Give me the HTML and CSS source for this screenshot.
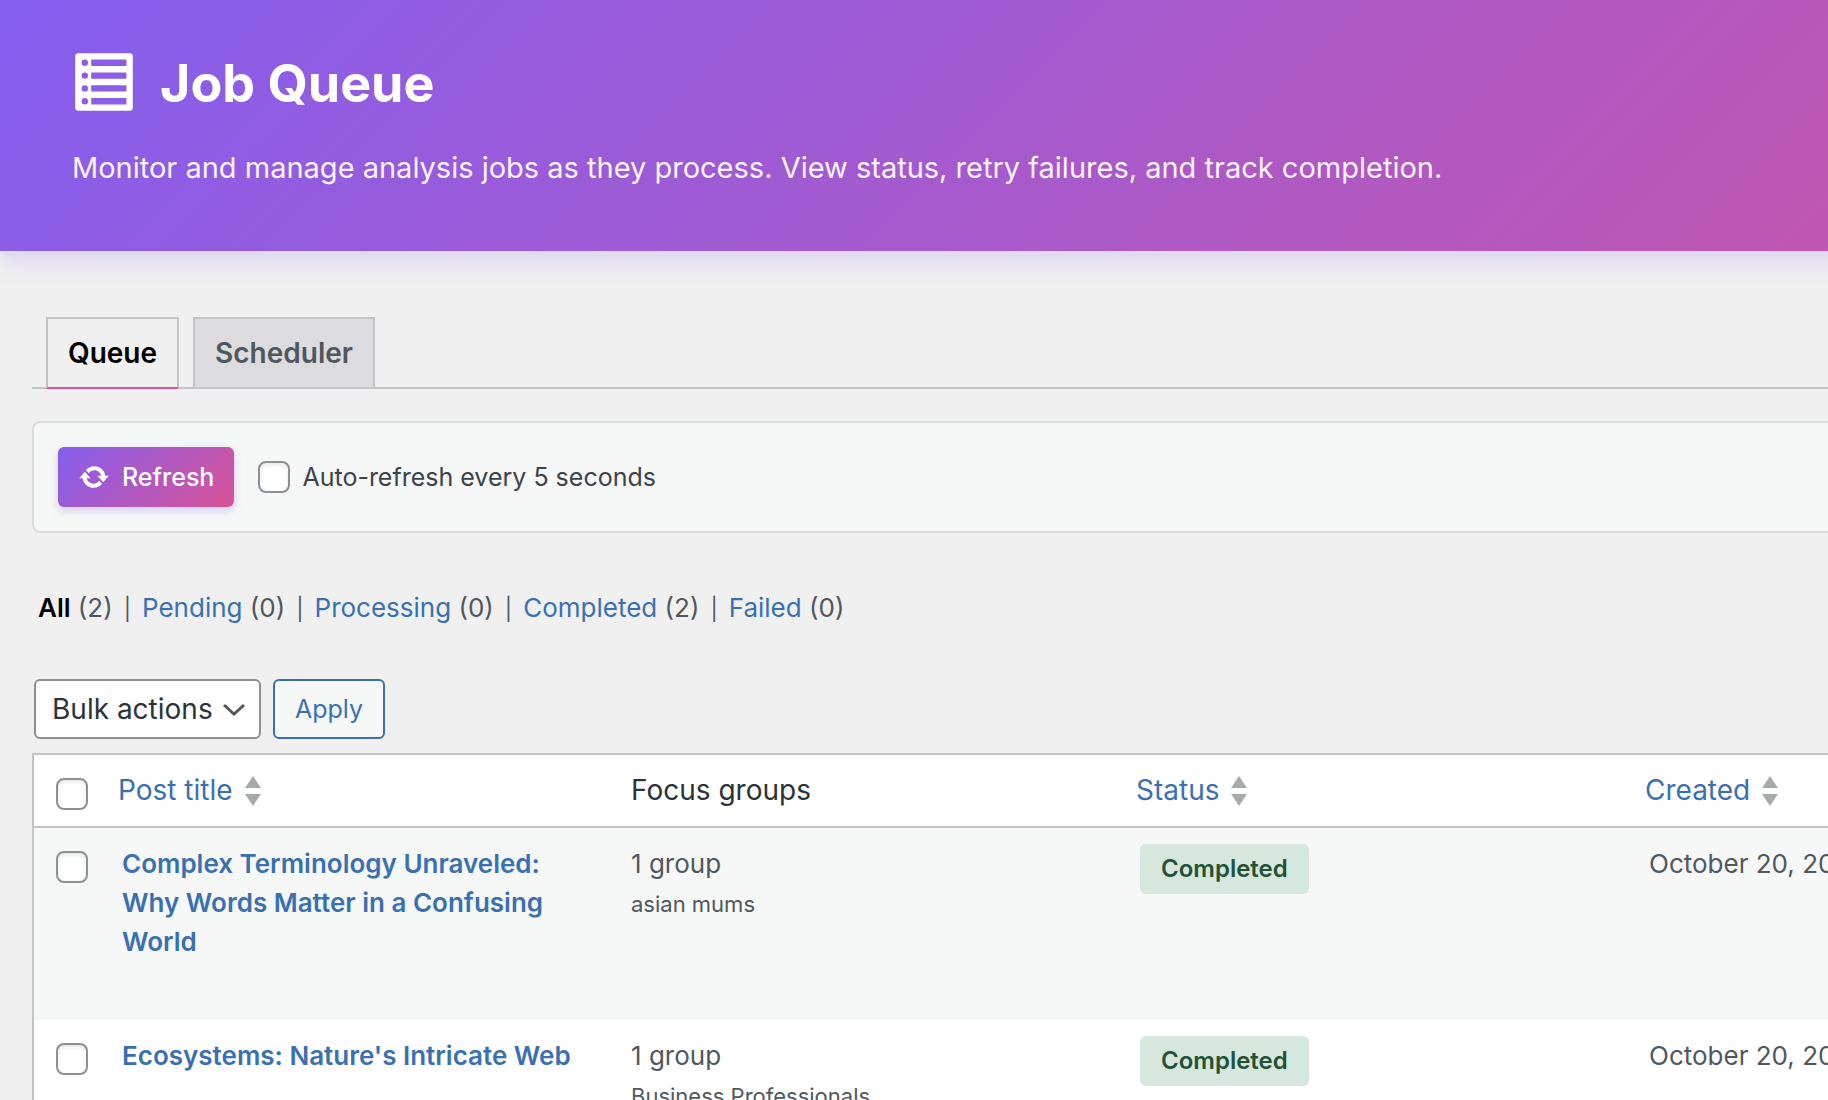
FILE: index.html
```html
<!DOCTYPE html>
<html lang="en">
<head>
<meta charset="utf-8">
<title>Job Queue</title>
<link rel="stylesheet" href="styles.css">
</head>
<body>
<svg class="sprite" aria-hidden="true">
  <symbol id="sort" viewBox="0 0 16 30"><path d="M8 0 16 12H0zM0 18h16L8 30z"/></symbol>
</svg>
<header class="page-header">
  <h1 class="page-title">
    <svg class="title-icon" viewBox="0 0 20 20" aria-hidden="true"><path fill-rule="evenodd" d="M2 1h16a1 1 0 0 1 1 1v16a1 1 0 0 1-1 1H2a1 1 0 0 1-1-1V2a1 1 0 0 1 1-1zM4 3a1 1 0 1 0 0 2 1 1 0 0 0 0-2zM6 3h11v2H6zM4 7a1 1 0 1 0 0 2 1 1 0 0 0 0-2zM6 7h11v2H6zM4 11a1 1 0 1 0 0 2 1 1 0 0 0 0-2zM6 11h11v2H6zM4 15a1 1 0 1 0 0 2 1 1 0 0 0 0-2zM6 15h11v2H6z"/></svg>
    <span class="title-text">Job Queue</span>
  </h1>
  <p class="page-intro">Monitor and manage analysis jobs as they process. View status, retry failures, and track completion.</p>
</header>
<main class="content">
  <nav class="tabs">
    <a class="tab tab-active" href="#queue">Queue</a>
    <a class="tab" href="#scheduler">Scheduler</a>
  </nav>
  <section class="toolbar">
    <button class="refresh" type="button">
      <svg class="refresh-icon" viewBox="0 0 20 20" aria-hidden="true"><path d="M10.2 3.28c3.53 0 6.43 2.61 6.92 6h2.08l-3.5 4-3.5-4h2.32c-.45-1.97-2.21-3.45-4.32-3.45-1.45 0-2.73.71-3.54 1.78L4.95 5.66C6.23 4.2 8.11 3.28 10.2 3.28zm-.4 13.44c-3.52 0-6.43-2.61-6.92-6H.8l3.5-4c1.17 1.33 2.33 2.67 3.5 4H5.48c.45 1.97 2.21 3.45 4.32 3.45 1.45 0 2.73-.71 3.54-1.78l1.71 1.95c-1.28 1.46-3.15 2.38-5.25 2.38z"/></svg>
      Refresh
    </button>
    <label class="auto"><input class="check" type="checkbox"> Auto-refresh every 5 seconds</label>
  </section>
  <ul class="filters">
    <li><a class="current" href="#all">All</a> (2)</li>
    <li><a href="#pending">Pending</a> (0)</li>
    <li><a href="#processing">Processing</a> (0)</li>
    <li><a href="#completed">Completed</a> (2)</li>
    <li><a href="#failed">Failed</a> (0)</li>
  </ul>
  <form class="bulk">
    <div class="select-wrap">
      <select class="select" aria-label="Bulk actions"><option>Bulk actions</option></select>
      <svg class="chevron" viewBox="0 0 22 14" aria-hidden="true"><path d="M1 2l10 9 10-9"/></svg>
    </div>
    <button class="apply" type="button">Apply</button>
  </form>
  <table class="jobs">
    <thead>
      <tr>
        <th class="col-check"><input class="check" type="checkbox" aria-label="Select all"></th>
        <th class="col"><a class="sort" href="#title">Post title <svg class="sort-icon"><use href="#sort"/></svg></a></th>
        <th class="col groups-cell">Focus groups</th>
        <th class="col"><a class="sort" href="#status">Status <svg class="sort-icon"><use href="#sort"/></svg></a></th>
        <th><a class="sort" href="#created">Created <svg class="sort-icon"><use href="#sort"/></svg></a></th>
      </tr>
    </thead>
    <tbody>
      <tr>
        <td><input class="check" type="checkbox" aria-label="Select Complex Terminology Unraveled"></td>
        <td class="title-cell"><a class="job-title" href="#job-1">Complex Terminology Unraveled: Why Words Matter in a Confusing World</a></td>
        <td class="groups-cell">1 group<small class="group">asian mums</small></td>
        <td class="status-cell"><span class="badge">Completed</span></td>
        <td class="date">October 20, 2025</td>
      </tr>
      <tr>
        <td><input class="check" type="checkbox" aria-label="Select Ecosystems"></td>
        <td class="title-cell"><a class="job-title" href="#job-2">Ecosystems: Nature's Intricate Web</a></td>
        <td class="groups-cell">1 group<small class="group">Business Professionals</small></td>
        <td class="status-cell"><span class="badge">Completed</span></td>
        <td class="date">October 20, 2025</td>
      </tr>
    </tbody>
  </table>
</main>
</body>
</html>
```
FILE: styles.css
```css
* { box-sizing: border-box; }
body {
  margin: 0;
  overflow: hidden;
  background: #f0f0f0;
  color: #50575e;
  font: 26px/39px Inter, "Liberation Sans", sans-serif;
}
a { color: #3a70b0; text-decoration: none; }
.sprite { display: none; }
.page-header {
  margin-right: -24px;
  padding: 48px 72px 60px;
  background: linear-gradient(135deg, #855eef, #da5396 142%);
  box-shadow: 0 8px 24px rgba(133, 94, 239, 0.22);
  color: #fff;
}
.page-title {
  display: flex;
  align-items: center;
  gap: 24px;
  margin: 0;
  font-size: 52px;
  line-height: 64px;
  font-weight: 700;
}
.title-icon { width: 64px; height: 64px; fill: currentColor; }
.title-text { padding-top: 4px; }
.page-intro { margin: 29px 0 0; font-size: 29px; line-height: 46px; color: #f9f3fd; }
.content { padding-left: 32px; }
.tabs {
  display: flex;
  gap: 14px;
  padding: 66px 0 0 14px;
  border-bottom: 2px solid #c3c4c7;
}
.tab {
  padding: 11px 20px;
  border: 2px solid #c3c4c7;
  border-bottom: 0;
  background: #dcdcde;
  color: #50575e;
  font-size: 28px;
  line-height: 46px;
  font-weight: 600;
}
.tab-active {
  margin-bottom: -2px;
  border-bottom: 2px solid #da5396;
  background: #f0f0f0;
  color: #000;
}
.toolbar {
  display: flex;
  align-items: center;
  gap: 24px;
  margin: 32px -8px 0 0;
  padding: 24px;
  border: 2px solid #dcdcde;
  border-radius: 8px;
  background: #f6f7f7;
}
.refresh {
  display: flex;
  align-items: center;
  gap: 12px;
  height: 60px;
  padding: 0 20px;
  border: 0;
  border-radius: 6px;
  background: linear-gradient(135deg, #845eee, #da5396);
  box-shadow: 0 4px 8px rgba(133, 94, 239, 0.25);
  color: #fff;
  font: 500 25px/40px Inter, "Liberation Sans", sans-serif;
}
.refresh-icon { width: 32px; height: 32px; fill: currentColor; }
.auto { display: flex; align-items: center; gap: 12px; color: #3c434a; font-size: 25px; }
.check {
  display: block;
  flex: none;
  appearance: none;
  width: 32px;
  height: 32px;
  margin: 0;
  border: 2px solid #8c8f94;
  border-radius: 8px;
  background: #fff;
  box-shadow: inset 0 2px 4px rgba(0, 0, 0, 0.1);
}
.filters {
  display: flex;
  margin: 55px 0 0;
  padding: 0 0 0 6px;
  list-style: none;
}
.filters li + li::before { content: "|"; margin: 0 11px; font-size: 22px; }
.filters .current { color: #000; font-weight: 600; }
.bulk { display: flex; gap: 12px; padding: 50px 2px 14px; }
.select-wrap { position: relative; }
.select {
  appearance: none;
  height: 60px;
  padding: 0 46px 0 16px;
  border: 2px solid #8c8f94;
  border-radius: 6px;
  background: #fff;
  color: #2c3338;
  font: 28px/40px Inter, "Liberation Sans", sans-serif;
}
.chevron {
  position: absolute;
  top: 24px;
  right: 16px;
  width: 22px;
  height: 14px;
  fill: none;
  stroke: #555;
  stroke-width: 3;
  pointer-events: none;
}
.apply {
  height: 60px;
  padding: 0 20px;
  border: 2px solid #3a70b0;
  border-radius: 6px;
  background: #f6f7f7;
  color: #3a70b0;
  font: 25px/40px Inter, "Liberation Sans", sans-serif;
}
.jobs {
  width: 100%;
  table-layout: fixed;
  border: 2px solid #c3c4c7;
  border-right: 0;
  border-spacing: 0;
  background: #fff;
}
.jobs th {
  height: 73px;
  padding: 0 16px;
  border-bottom: 2px solid #c3c4c7;
  color: #2c3338;
  font-size: 28px;
  font-weight: 400;
  text-align: left;
}
.jobs td { height: 192px; padding: 16px; vertical-align: top; }
.jobs .col-check { width: 68px; padding: 6px 0 0 22px; }
.jobs td:first-child { padding: 23px 0 0 22px; }
.jobs .col { width: 509px; }
.jobs .groups-cell,
.jobs .title-cell,
.jobs .status-cell,
.jobs .date { padding-left: 20px; }
.jobs .date { white-space: nowrap; }
.jobs tbody tr:nth-child(odd) { background: #f6f7f7; }
.sort { display: flex; align-items: center; gap: 12px; }
.sort-icon { width: 16px; height: 30px; fill: #a7aaad; }
.job-title { font-weight: 600; }
.group { display: block; font-size: 22px; line-height: 42px; }
.badge {
  display: inline-block;
  padding: 5px 21px;
  border-radius: 6px;
  background: #d6e7de;
  color: #235334;
  font-size: 24px;
  line-height: 40px;
  font-weight: 600;
}
```
